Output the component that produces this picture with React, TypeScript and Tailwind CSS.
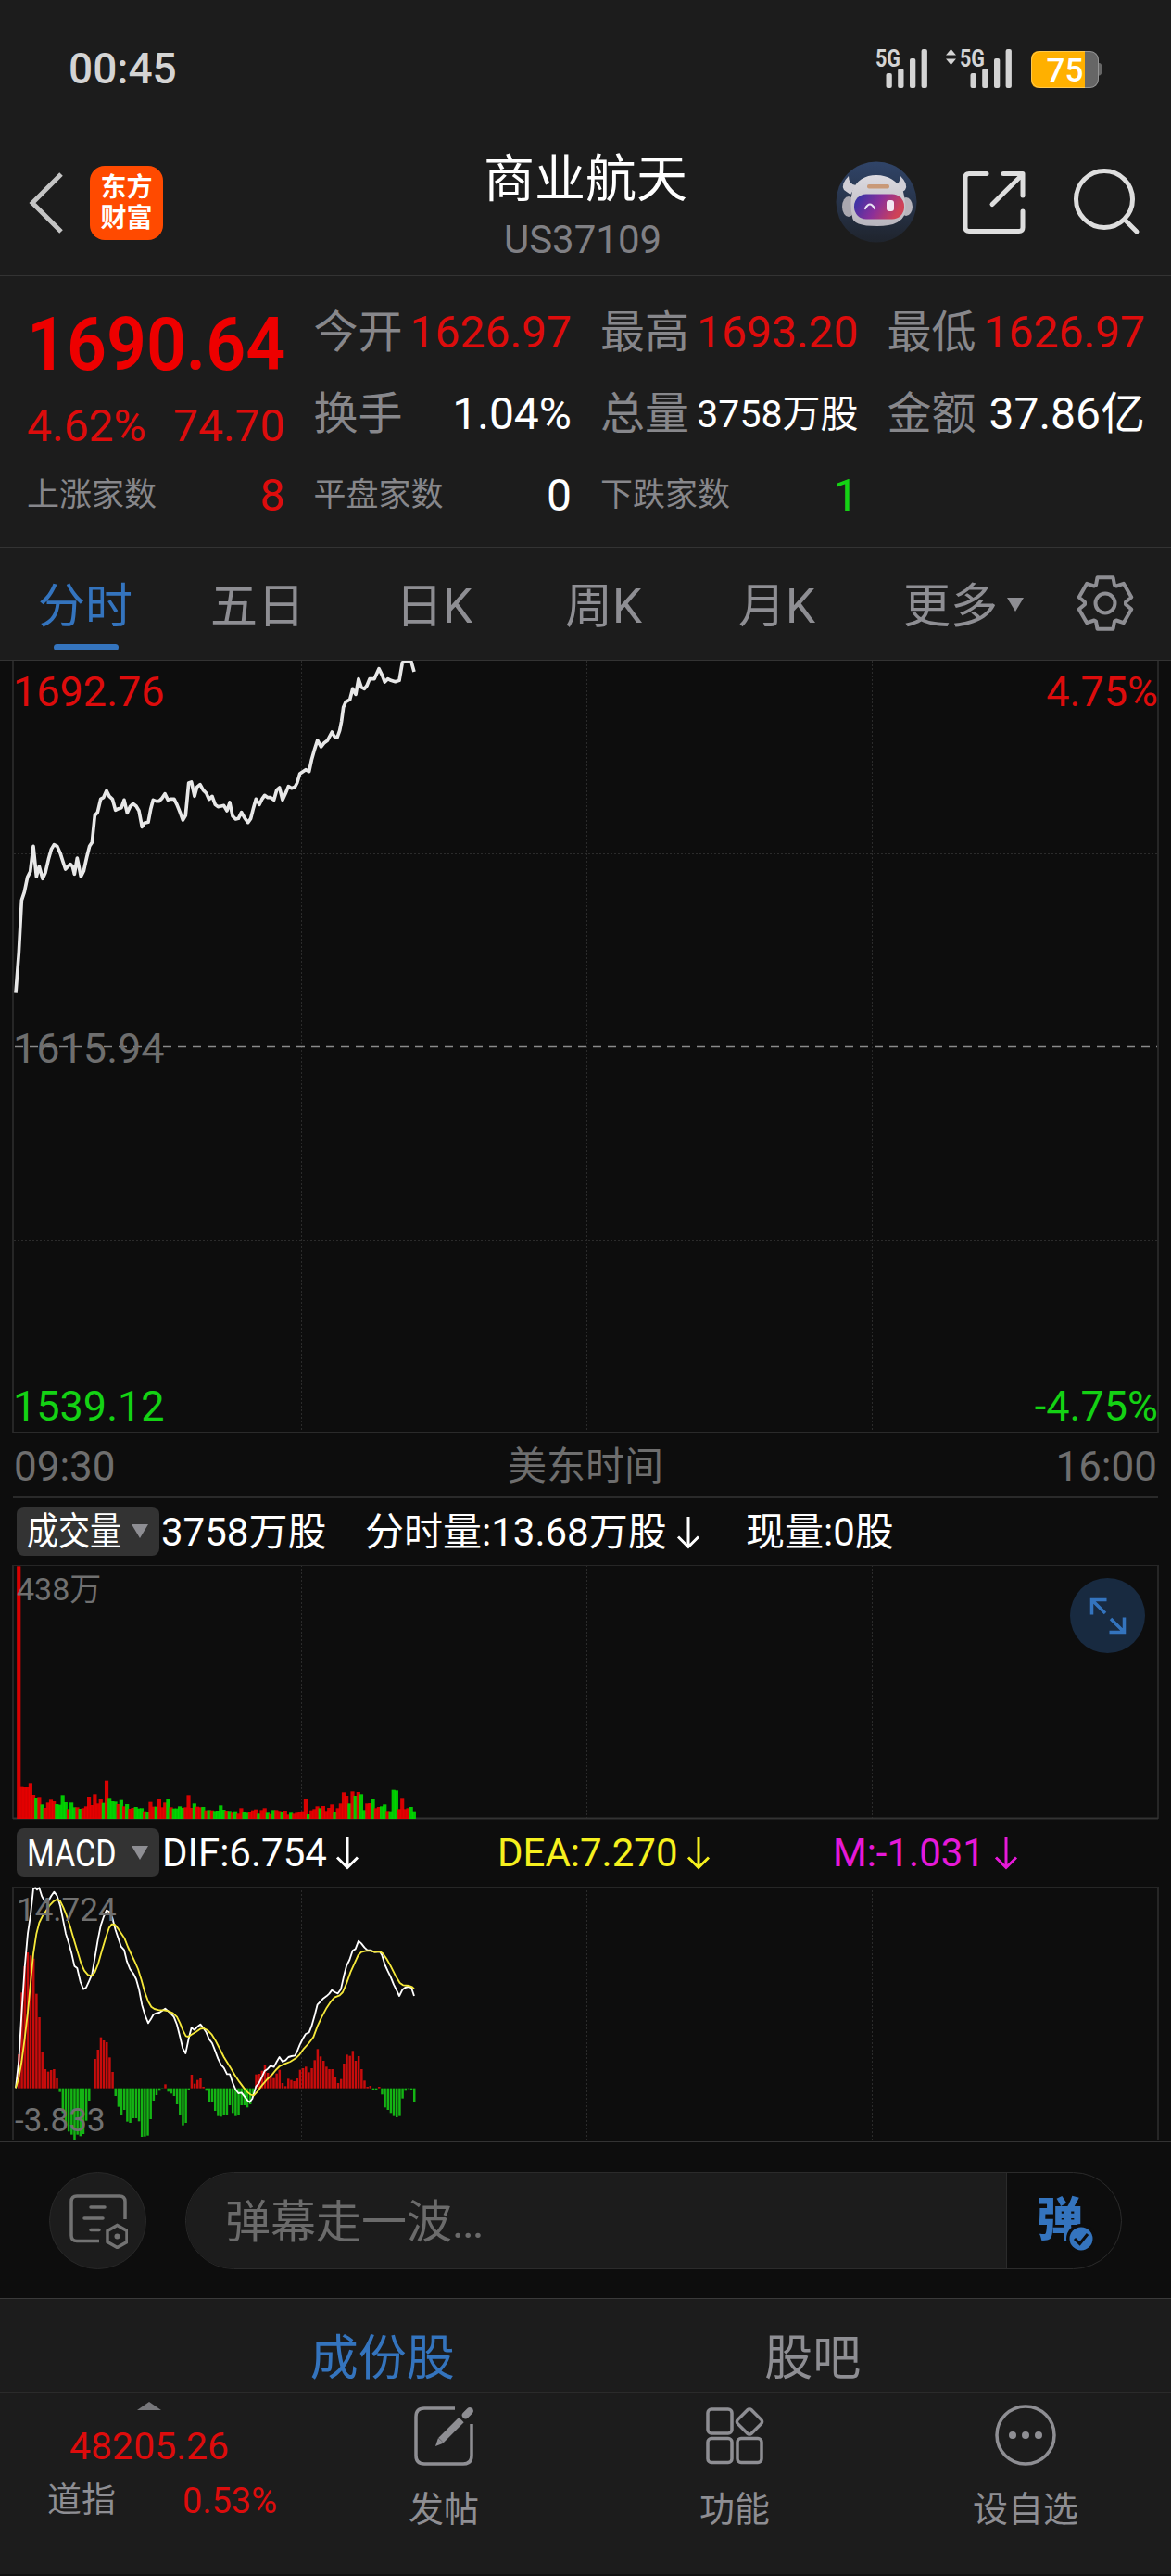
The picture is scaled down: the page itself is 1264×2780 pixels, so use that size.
import React from 'react';

const pricePoints =
  '51,1115 61,985 70,815 79,788 89,740 98,722 108,640 118,738 127,705 138,745 147,725 157,682 166,650 175,635 185,640 195,662 204,690 212,714 220,705 228,698 235,705 241,730 250,678 262,738 271,720 281,675 290,640 298,628 307,540 316,530 326,487 335,482 345,460 354,478 364,487 374,523 384,518 393,515 402,490 412,532 421,512 431,502 441,510 450,525 460,577 468,565 480,562 488,520 496,490 506,494 515,494 525,484 534,470 544,490 554,487 564,487 573,505 583,530 592,555 601,540 611,435 620,432 630,478 638,448 648,440 658,458 668,468 677,488 687,478 697,505 706,512 716,510 725,508 735,525 744,498 753,542 763,552 772,550 782,530 792,548 803,563 812,550 821,515 829,487 840,505 848,488 857,475 867,482 876,482 887,490 896,458 905,450 915,490 925,468 934,446 944,452 955,448 962,435 971,405 981,398 990,392 1001,398 1009,360 1019,325 1028,297 1040,318 1050,305 1060,298 1067,285 1075,270 1083,285 1092,288 1100,265 1106,235 1112,190 1120,172 1133,165 1142,130 1152,148 1161,98 1170,125 1180,130 1188,120 1197,98 1212,98 1227,65 1237,85 1246,108 1256,98 1266,103 1280,107 1293,103 1303,45 1318,40 1332,43 1341,75';

const difPoints =
  '51,730 61,640 70,490 80,340 90,230 99,170 108,85 115,82 120,88 127,82 136,110 146,128 155,128 166,108 175,95 185,108 195,140 204,185 213,230 223,262 232,295 241,335 250,342 260,385 270,410 279,405 288,385 298,362 307,310 317,250 326,205 336,175 345,155 355,160 364,180 374,218 383,245 392,272 402,283 411,320 421,345 432,360 441,378 450,410 460,462 470,495 480,520 488,508 497,492 506,488 516,486 525,480 535,473 545,482 554,490 563,500 573,525 583,565 592,602 601,618 611,570 620,535 630,542 639,532 649,524 658,535 668,550 677,572 687,585 696,608 706,635 716,655 725,665 735,685 744,685 753,712 763,735 772,747 782,745 792,758 801,770 808,776 817,765 829,725 838,715 848,695 857,675 867,668 876,658 887,662 896,645 905,630 915,645 925,640 934,630 944,627 955,625 962,612 971,590 981,570 990,555 1001,550 1009,530 1019,495 1028,460 1038,450 1047,440 1057,433 1066,425 1075,413 1085,420 1094,424 1104,410 1113,370 1122,335 1132,315 1142,285 1151,280 1161,254 1170,262 1180,275 1189,283 1199,284 1213,290 1230,288 1237,300 1246,330 1255,350 1265,370 1275,395 1285,415 1293,432 1303,412 1312,405 1322,402 1332,405 1341,432';

const deaPoints =
  '51,730 60,700 70,645 80,570 90,485 99,390 108,295 118,230 127,195 137,175 147,160 160,140 172,127 185,119 195,125 205,145 215,170 225,200 235,235 250,285 262,325 273,350 285,364 297,367 307,355 318,328 330,285 342,245 353,212 362,200 372,201 383,215 393,230 403,245 414,273 425,297 436,320 447,345 458,380 469,420 480,450 490,467 500,474 515,478 530,478 545,481 560,488 573,500 583,520 593,545 602,562 610,564 620,557 635,548 650,538 660,537 672,543 685,556 697,575 710,600 725,630 745,662 760,688 775,710 790,730 800,742 812,752 822,754 833,742 848,722 865,702 880,688 893,672 905,660 920,653 940,645 960,632 970,622 982,605 1000,585 1015,565 1028,530 1042,500 1058,470 1070,452 1083,437 1100,430 1110,420 1122,392 1135,355 1150,322 1160,300 1170,290 1185,286 1200,286 1215,290 1230,288 1240,295 1252,312 1265,335 1280,365 1295,390 1305,397 1325,399 1335,403 1341,409';

// one value per minute, negative = falling minute
const volumes = [
  818, 106, 105, 104, 116, 78, -69, 71, -47, 36, 53, 62, 57, -48, -46, -77, -54, 32, -53, -38, 38, -33, 35, 41, 72, 45,
  80, 50, 65, -52, 124, -68, -57, -56, 48, -61, 41, -48, 33, 36, -39, -34, -35, 25, -22, 55, 40, -40, 65, 38, 53, -64,
  38, -34, -34, -41, -36, 38, 77, 36, -50, 40, 38, -39, 28, -29, 28, -26, -27, -44, -30, 27, -26, 20, -25, 17, 35, -23,
  -20, 24, 28, 31, -17, 29, 35, -20, 16, -29, 29, 26, -22, 27, 14, -20, 17, 20, 23, 25, 65, -15, 28, 32, 41, -35, 42,
  26, 36, 47, -24, 35, 50, 86, 75, -50, 89, -75, 87, -80, -29, 50, 51, -65, 35, 39, -41, -47, 26, -25, -94, -92, 32,
  68, 32, 35, -39, -25,
];

const macd = [
  0, 110, 310, 395, 440, 430, 420, 306, 230, 118, 62, 54, 59, 62, 32, -12, -80, -120, -140, -150, -168, -150, -155,
  -148, -105, -40, 0, 95, 125, 165, 155, 149, 100, 53, -25, -60, -85, -70, -108, -112, -97, -97, -107, -157, -156,
  -153, -100, -40, -22, -8, -1, 13, -11, -17, -25, -52, -85, -120, -112, -6, 44, 15, 27, 32, 5, -8, -45, -45, -73, -90,
  -92, -87, -88, -55, -80, -90, -87, -55, -55, -62, -52, -20, 45, 47, 57, 74, 50, 44, 33, 48, 60, 17, 7, 31, 27, 23,
  32, 60, 65, 70, 52, 65, 91, 127, 103, 89, 70, 62, 62, 35, 17, 30, 80, 109, 105, 121, 89, 104, 62, 25, 5, 8, -6, -6,
  5, -20, -62, -70, -80, -90, -94, -90, -33, -8, -2, -6, -45,
];

const gear = Array.from({ length: 6 }, (_, k) =>
  [
    [22, -27],
    [29, -17],
    [29, 17],
    [22, 27],
  ]
    .map(([r, d]) => {
      const a = ((k * 60 - 90 + d) * Math.PI) / 180;
      return `${(32 + r * Math.cos(a)).toFixed(1)},${(32 + r * Math.sin(a)).toFixed(1)}`;
    })
    .join(' ')
).join(' ');

const Signal = ({ updown }: { updown?: boolean }) => (
  <svg width="74" height="48" viewBox="0 0 74 48" fill="#d4d4d4">
    {updown && <path d="M0 9.5 5.500 3 11 9.500zM0 13.500 5.500 20 11 13.500z" />}
    <text x="15" y="21.500" fontSize="25" fontWeight="700" textLength="27" lengthAdjust="spacingAndGlyphs">5G</text>
    <rect x="26.500" y="29" width="6.300" height="16" rx="2" />
    <rect x="39.200" y="24" width="6.300" height="21" rx="2" />
    <rect x="52" y="13" width="6.300" height="32" rx="2" />
    <rect x="64.600" y="3" width="6.300" height="42" rx="2" />
  </svg>
);

const StatusBar = () => (
  <div className="flex h-[150px] items-start justify-between pr-[72px] pl-[74px] text-[#d4d4d4]">
    <span className="mt-[50px] text-[46px] leading-[48px] font-medium">00:45</span>
    <div className="mt-[50px] flex">
      <Signal />
      <div className="w-[17px]" />
      <Signal updown />
      <svg className="ml-[17px]" width="80" height="48" viewBox="0 0 80 48">
        <path d="M73 18h2q3 1 3 6.500t-3 7h-2z" fill="#666" />
        <rect x="1" y="5" width="73" height="40" rx="9" fill="#666" />
        <path d="M10 5h49v40H10q-9 0-9-9V14q0-9 9-9z" fill="#ffb000" />
        <rect x="1.500" y="5.500" width="72" height="39" rx="9" fill="none" stroke="#fff" strokeOpacity=".3" />
        <text x="17.500" y="38" fontSize="35" fontWeight="500" fill="#fff" textLength="40">75</text>
      </svg>
    </div>
  </div>
);

const Robot = () => (
  <svg width="88" height="88" viewBox="0 0 88 88">
    <defs>
      <linearGradient id="sky" x1="0" y1="0" x2="0" y2="1">
        <stop offset="0" stopColor="#304468" />
        <stop offset="1" stopColor="#1f242d" />
      </linearGradient>
      <linearGradient id="visor" x1="0" y1="0" x2="1" y2="0.3">
        <stop offset="0" stopColor="#2a35a8" />
        <stop offset="0.55" stopColor="#8a2f9a" />
        <stop offset="1" stopColor="#cf4257" />
      </linearGradient>
      <linearGradient id="shell" x1="0" y1="0" x2="0" y2="1">
        <stop offset="0" stopColor="#dcdae0" />
        <stop offset="1" stopColor="#b8b5bd" />
      </linearGradient>
    </defs>
    <circle cx="44" cy="44" r="43.500" fill="url(#sky)" />
    <path d="M14 16q-9 9-5 15l7 5 6-10q-8-1-8-10zM70 16q9 9 5 15l-7 5-6-10q8-1 8-10z" fill="#d0ced6" />
    <ellipse cx="14" cy="49" rx="7" ry="11" fill="#aaa8b0" />
    <ellipse cx="76" cy="49" rx="7" ry="10" fill="#b8b5bd" />
    <path d="M18 32q7-17 26-17t29 18q3 12 2 22-3 15-30 15T18 60q-3-14 0-28z" fill="url(#shell)" />
    <rect x="20" y="35.500" width="54" height="27" rx="13" fill="url(#visor)" />
    <path d="M32 51q5-9 10 0" fill="none" stroke="#e8e4f4" strokeWidth="2.200" strokeLinecap="round" />
    <rect x="55" y="42" width="8" height="12" rx="3" fill="#f1e6f2" />
    <rect x="34" y="25" width="24" height="4.500" rx="2" fill="#c99978" />
  </svg>
);

const Header = () => (
  <div className="relative flex h-[148px] items-start justify-between border-b border-[#333] pr-[33px] pl-[30px]">
    <div className="flex">
      <svg className="mt-[34px]" width="42" height="70" viewBox="0 0 42 70" fill="none" stroke="#c4c4c4" strokeWidth="5">
        <path d="M36 4 5 35l31 31" />
      </svg>
      <div className="mt-[29px] ml-[25px] flex h-[80px] w-[79px] flex-col items-center justify-center rounded-[16px] bg-[#ff4a00] text-[28px] leading-[33px] font-bold text-white">
        <span>东方</span>
        <span>财富</span>
      </div>
    </div>
    <div className="absolute inset-x-0 top-0 flex flex-col items-center">
      <span className="mt-[11px] text-[55px] leading-[64px] text-white">商业航天</span>
      <span className="mt-[9px] mr-[6px] text-[42px] leading-[50px] text-[#808084]">US37109</span>
    </div>
    <div className="flex">
      <div className="mt-[24px]"><Robot /></div>
      <svg className="mt-[32px] ml-[47px]" width="74" height="74" viewBox="0 0 74 74" fill="none" stroke="#dedede" strokeWidth="5" strokeLinecap="round" strokeLinejoin="round">
        <path d="M28 5.500H9q-4 0-4 4v54q0 4 4 4h54q4 0 4-4V46M46 5.500h21V29M66 7 34 38.500" />
      </svg>
      <svg className="mt-[32px] ml-[44px]" width="76" height="74" viewBox="0 0 76 74" fill="none" stroke="#dedede" strokeWidth="5" strokeLinecap="round">
        <circle cx="37" cy="33" r="30.500" />
        <path d="M59 55 72 68" />
      </svg>
    </div>
  </div>
);

type StatProps = {
  label: string;
  value: string;
  color?: string;
  size?: string;
  small?: boolean;
};

const Stat = ({ label, value, color = 'text-[#dd0c0c]', size = 'text-[48px]', small }: StatProps) => (
  <div className="flex h-[88px] items-center justify-between whitespace-nowrap">
    <span className={small ? 'text-[35px] leading-[88px] text-[#87878b]' : 'text-[48px] leading-[88px] text-[#87878b]'}>{label}</span>
    <span className={`${size} ${color} leading-[88px]`}>{value}</span>
  </div>
);

const Quote = () => (
  <div className="grid h-[293px] grid-cols-4 gap-x-[31px] border-b border-[#333] pt-[17px] pr-[28px] pl-[29px]">
    <div>
      <div className="h-[114px] w-[278px]">
        <span className="inline-block origin-left scale-x-[0.94] text-[80px] leading-[115px] font-semibold text-[#ee0000]">1690.64</span>
      </div>
      <div className="flex h-[62px] items-center justify-between text-[48px] text-[#dd0c0c]">
        <span>4.62%</span>
        <span>74.70</span>
      </div>
      <Stat label="上涨家数" value="8" small />
    </div>
    <div>
      <Stat label="今开" value="1626.97" />
      <Stat label="换手" value="1.04%" color="text-white" />
      <Stat label="平盘家数" value="0" color="text-white" small />
    </div>
    <div>
      <Stat label="最高" value="1693.20" />
      <Stat label="总量" value="3758万股" color="text-white" size="text-[41px]" />
      <Stat label="下跌家数" value="1" color="text-[#14d214]" small />
    </div>
    <div>
      <Stat label="最低" value="1626.97" />
      <Stat label="金额" value="37.86亿" color="text-white" />
    </div>
  </div>
);

const tabs = [
  { name: '五日', width: 'w-[200px]' },
  { name: '日K', width: 'w-[183px]' },
  { name: '周K', width: 'w-[187px]' },
  { name: '月K', width: 'w-[178px]' },
];

const PeriodTabs = () => (
  <div className="flex h-[122px] border-b border-[#333] pl-[41px] text-[51px] leading-[128px] text-[#8e8e93]">
    <div className="relative w-[186px] text-[#3474be]">
      分时
      <div className="absolute top-[104px] left-[17px] h-[7px] w-[70px] rounded-full bg-[#3474be]" />
    </div>
    {tabs.map((tab) => (
      <div key={tab.name} className={tab.width}>{tab.name}</div>
    ))}
    <div className="flex w-[186px] items-start">
      更多
      <svg className="mt-[54px] ml-[10px]" width="18" height="15" viewBox="0 0 18 15" fill="#8e8e93"><path d="M0 0h18L9 15z" /></svg>
    </div>
    <svg className="mt-[28px]" width="64" height="64" viewBox="0 0 64 64" fill="none" stroke="#8e8e93" strokeWidth="4" strokeLinejoin="round">
      <polygon points={gear} />
      <circle cx="32" cy="32" r="10.500" />
    </svg>
  </div>
);

const Grid = ({ height }: { height: number }) => (
  <g stroke="#2b2b2b">
    <path d={`M14 0V${height}M1250 0V${height}`} strokeWidth="2" stroke="#262626" />
    <path d={`M325.500 0V${height}M633.500 0V${height}M941.500 0V${height}`} strokeDasharray="2 2" />
  </g>
);

const PriceChart = () => (
  <div className="relative h-[834px]">
    <svg className="block" width="1264" height="834" viewBox="0 0 1264 834">
      <Grid height={833} />
      <path d="M15 208.500H1249M15 625.500H1249" stroke="#2b2b2b" strokeDasharray="2 2" />
      <path d="M16 416.500H1249" stroke="#8a8a8a" strokeWidth="1.500" strokeDasharray="9 7" />
      <path d="M14 833H1250" stroke="#2a2a2a" strokeWidth="2" />
      <polyline points={pricePoints} transform="translate(0 -13) scale(0.33333)" fill="none" stroke="#e8e8e8" strokeWidth="11" strokeLinejoin="round" />
    </svg>
    <div className="absolute inset-x-[14px] inset-y-0 text-[45px] leading-[50px]">
      <div className="flex justify-between pt-[9px] text-[#dd0c0c]">
        <span>1692.76</span>
        <span>4.75%</span>
      </div>
      <div className="pt-[335px] text-[#6e6e6e]">1615.94</div>
      <div className="flex justify-between pt-[336px] text-[#14d214]">
        <span>1539.12</span>
        <span>-4.75%</span>
      </div>
    </div>
  </div>
);

const Down = ({ className }: { className: string }) => (
  <svg className={className} width="26" height="36" viewBox="0 0 26 36" fill="none" stroke="currentColor" strokeWidth="3">
    <path d="M13 1V33M2 22.500 13 33.500 24 22.500" />
  </svg>
);

const Picker = ({ label }: { label: string }) => (
  <div className="flex h-[53px] w-[154px] shrink-0 items-center rounded-[8px] bg-[#333] pl-[11px]">
    <div className="w-[113px] text-[41px] leading-[54px] whitespace-nowrap">
      <span className="inline-block origin-left scale-x-[0.83]">{label}</span>
    </div>
    <svg width="18" height="15" viewBox="0 0 18 15" fill="#8e8e93"><path d="M0 0h18L9 15z" /></svg>
  </div>
);

const VolumeChart = () => (
  <div className="relative h-[275px]">
    <svg className="block" width="1264" height="275" viewBox="0 0 1264 275">
      <Grid height={274} />
      <path d="M14 .5H1250" stroke="#262626" />
      <path d="M14 273.500H1250" stroke="#333" strokeWidth="2" />
      <g transform="translate(0 -29) scale(0.33333)">
        {volumes.map((v, i) => (
          <rect
            key={i}
            x={54.5 + i * 9.48}
            y={909 - Math.abs(v)}
            width="12.500"
            height={Math.abs(v)}
            fill={v > 0 ? '#ee0000' : '#00dc00'}
            fillOpacity="0.9"
          />
        ))}
      </g>
    </svg>
    <span className="absolute top-[6px] left-[18px] text-[34px] leading-[40px] text-[#707070]">438万</span>
    <div className="absolute top-[14px] left-[1155px] flex h-[81px] w-[81px] items-center justify-center rounded-full bg-[#182a40]">
      <svg width="40" height="40" viewBox="0 0 40 40" fill="none" stroke="#3474be" strokeWidth="3.500">
        <path d="M18.500 2.500H2.500V18.500M2.500 2.500 17 17M21.500 37.500H37.500V21.500M37.500 37.500 23 23" />
      </svg>
    </div>
  </div>
);

const MacdChart = () => (
  <div className="relative h-[276px] border-b border-[#333]">
    <svg className="block" width="1264" height="275" viewBox="0 0 1264 275">
      <Grid height={274} />
      <path d="M14 .5H1250" stroke="#262626" />
      <g transform="translate(0 -26) scale(0.33333)">
        {macd.map((v, i) => (
          <rect
            key={i}
            x={48 + i * 9.485}
            y={v > 0 ? 731 - v : 731}
            width="7.500"
            height={Math.abs(v)}
            fill={v > 0 ? '#c80c0c' : '#14b414'}
          />
        ))}
        <g fill="none" strokeWidth="5.500" strokeLinejoin="round">
          <polyline points={difPoints} stroke="#fff" />
          <polyline points={deaPoints} stroke="#f5e83a" />
        </g>
      </g>
    </svg>
    <span className="absolute top-[6px] left-[18px] text-[35px] leading-[40px] text-[#707070]">14.724</span>
    <span className="absolute top-[233px] left-[16px] text-[35px] leading-[40px] text-[#707070]">-3.833</span>
  </div>
);

const Charts = () => (
  <div className="bg-[#0d0d0d] text-white">
    <PriceChart />
    <div className="mx-[14px] flex h-[70px] items-center justify-between border-b-2 border-[#2a2a2a] px-[1px] pt-[3px] text-[44px] text-[#6e6e6e]">
      <span>09:30</span>
      <span className="text-[42px]">美东时间</span>
      <span>16:00</span>
    </div>
    <div className="flex h-[72px] items-start pt-[9px] pl-[18px] text-[42px] leading-[55px] whitespace-nowrap">
      <Picker label="成交量" />
      <span className="ml-[2px] w-[220px]">3758万股</span>
      <span className="w-[336px]">分时量:13.68万股</span>
      <Down className="mt-[10px] w-[26px]" />
      <span className="ml-[49px]">现量:0股</span>
    </div>
    <VolumeChart />
    <div className="flex h-[72px] items-start pt-[9px] pl-[18px] text-[42px] leading-[54px] whitespace-nowrap">
      <Picker label="MACD" />
      <div className="ml-[3px] flex w-[362px]">
        DIF:6.754
        <Down className="mt-[9px] ml-[9px]" />
      </div>
      <div className="flex w-[362px] text-[#f5f01e]">
        DEA:7.270
        <Down className="mt-[9px] ml-[9px]" />
      </div>
      <div className="flex text-[#e619d8]">
        M:-1.031
        <Down className="mt-[9px] ml-[10px]" />
      </div>
    </div>
    <MacdChart />
  </div>
);

const Danmu = () => (
  <div className="flex h-[169px] items-start border-b border-[#3a3a3a] bg-[#0d0d0d] pt-[32px] pl-[53px]">
    <div className="flex h-[105px] w-[105px] items-center justify-center rounded-full border border-[#282828] bg-[#1c1c1c]">
      <svg width="64" height="60" viewBox="0 0 64 60" fill="none" stroke="#727272" strokeWidth="3.500" strokeLinecap="round">
        <path d="M33 51.500H9q-6 0-6-6V9q0-6 6-6h46q6 0 6 6V28" strokeLinecap="butt" />
        <path d="M24 15H39M17 27H37M24 39.500H33" />
        <path d="M53.500 34.500 64 40.500V52.500L53.500 58.500 43 52.500V40.500z" transform="translate(-1 0)" />
        <circle cx="52.500" cy="46.500" r="3" fill="#727272" stroke="none" />
      </svg>
    </div>
    <div className="ml-[42px] flex h-[105px] w-[1011px] overflow-hidden rounded-full border border-[#2b2b2b]">
      <div className="w-[886px] border-r border-[#2b2b2b] bg-[#1c1c1c] pl-[42px] text-[49px] leading-[108px] text-[#6b6b6b]">
        弹幕走一波<span className="tracking-[-2px]">...</span>
      </div>
      <div className="relative flex-1 pl-[32px]">
        <span className="text-[50px] leading-[102px] font-black text-[#3474be]">弹</span>
        <svg className="absolute top-[53px] left-[62px]" width="36" height="36" viewBox="0 0 36 36">
          <circle cx="18" cy="18" r="16" fill="#0d0d0d" />
          <circle cx="18" cy="18" r="12.500" fill="#3474be" />
          <path d="M11 18 16.500 23.500 25 13" fill="none" stroke="#0d0d0d" strokeWidth="3" />
        </svg>
      </div>
    </div>
  </div>
);

const navItem = 'flex w-[314px] flex-col items-center pt-[13px]';
const navLabel = 'mt-[24px] text-[38px] leading-[46px]';

const BottomNav = () => (
  <div className="flex h-[198px] border-b-2 border-[#111] text-[#8e8e93]">
    <div className="w-[322px]">
      <svg className="mt-[10px] ml-[148px] block" width="26" height="9" viewBox="0 0 26 9" fill="#77777b"><path d="M0 9 13 0l13 9z" /></svg>
      <div className="mt-[16px] pl-[75px] text-[41px] leading-[46px] text-[#dd0c0c]">48205.26</div>
      <div className="mt-[13px] flex justify-between pr-[23px] pl-[51px] leading-[46px]">
        <span className="text-[37px]">道指</span>
        <span className="text-[38px] text-[#dd0c0c]">0.53%</span>
      </div>
    </div>
    <div className={navItem}>
      <svg width="66" height="66" viewBox="0 0 66 66" fill="none" stroke="#8e8e93" strokeWidth="3.500">
        <path d="M45 4H12q-9 0-9 9v42q0 9 9 9h42q9 0 9-9V21" />
        <path d="M52 16.500 30 38.500" strokeWidth="7.500" />
        <path d="M56.500 11.500 61 7" strokeWidth="7.500" strokeLinecap="round" />
        <path d="M27 36 33 41.500 24 45z" fill="#8e8e93" stroke="none" />
      </svg>
      <span className={navLabel}>发帖</span>
    </div>
    <div className={navItem}>
      <svg width="66" height="66" viewBox="0 0 66 66" fill="none" stroke="#8e8e93" strokeWidth="3.500">
        <rect x="4" y="5" width="26" height="26" rx="4" />
        <rect x="4" y="36.500" width="26" height="26" rx="4" />
        <rect x="36" y="36.500" width="26" height="26" rx="4" />
        <rect x="38.500" y="8" width="21" height="21" rx="3" transform="rotate(45 49 18.500)" />
      </svg>
      <span className={navLabel}>功能</span>
    </div>
    <div className={navItem}>
      <svg width="66" height="66" viewBox="0 0 66 66" fill="#8e8e93">
        <circle cx="33" cy="33" r="31" fill="none" stroke="#8e8e93" strokeWidth="3.500" />
        <circle cx="19" cy="33" r="4" />
        <circle cx="33" cy="33" r="4" />
        <circle cx="47" cy="33" r="4" />
      </svg>
      <span className={navLabel}>设自选</span>
    </div>
  </div>
);

const App = () => {
  return (
    <div className="w-[1264px] overflow-hidden bg-[#1c1c1c] font-[Roboto,'Noto_Sans_CJK_SC',sans-serif]">
      <StatusBar />
      <Header />
      <Quote />
      <PeriodTabs />
      <Charts />
      <Danmu />
      <div className="flex h-[101px] justify-evenly border-b border-[#2b2b2b] pt-[26px] text-[52px] leading-[77px]">
        <span className="text-[#3474be]">成份股</span>
        <span className="text-[#8e8e93]">股吧</span>
      </div>
      <BottomNav />
    </div>
  );
};

export default App;
